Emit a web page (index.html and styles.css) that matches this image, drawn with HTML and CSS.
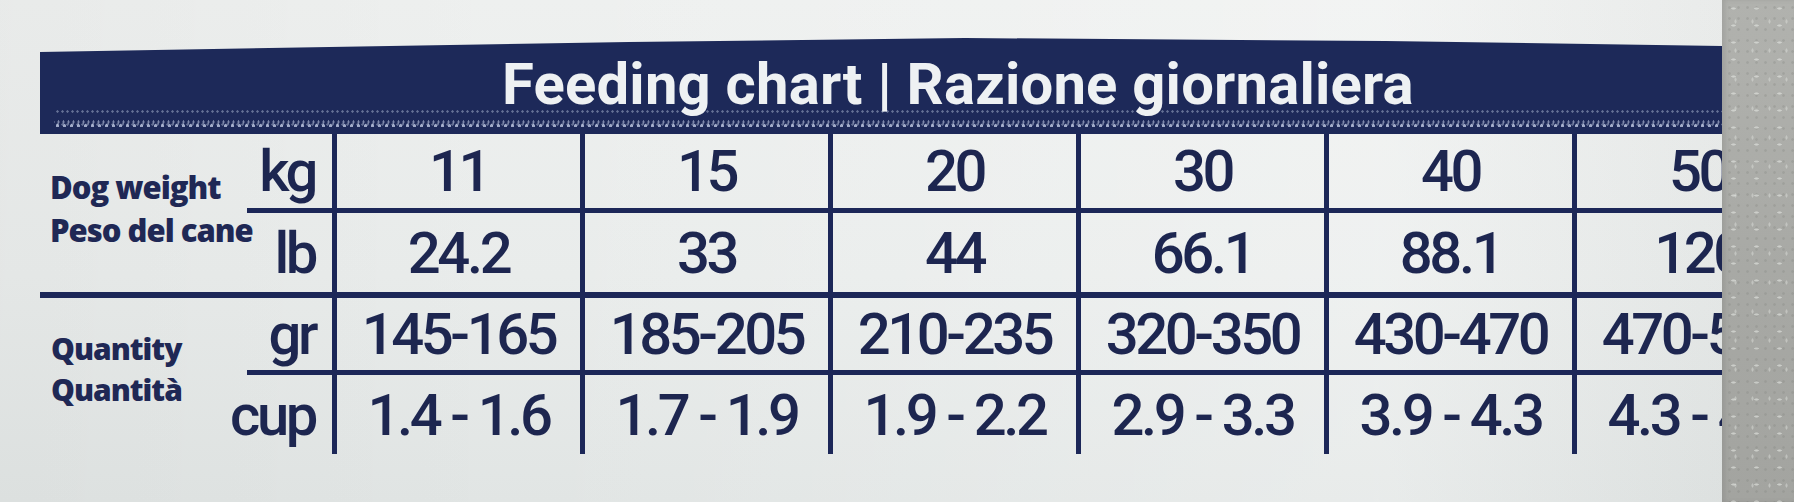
FILE: index.html
```html
<!DOCTYPE html>
<html lang="en">
<head>
<meta charset="utf-8">
<title>Feeding chart</title>
<link rel="stylesheet" href="styles.css">
</head>
<body>
<div class="scene">
  <div class="sheet">
    <div class="band">
      <h1 class="title">Feeding chart | Razione giornaliera</h1>
    </div>
    <div class="group group-weight">
      <div class="label">
        <span>Dog weight</span>
        <span>Peso del cane</span>
      </div>
      <div class="rows">
        <div class="row row-kg">
          <div class="unit">kg</div>
          <div class="cell">11</div>
          <div class="cell">15</div>
          <div class="cell">20</div>
          <div class="cell">30</div>
          <div class="cell">40</div>
          <div class="cell">50</div>
        </div>
        <div class="row row-lb">
          <div class="unit">lb</div>
          <div class="cell">24.2</div>
          <div class="cell">33</div>
          <div class="cell">44</div>
          <div class="cell">66.1</div>
          <div class="cell">88.1</div>
          <div class="cell">120</div>
        </div>
      </div>
    </div>
    <div class="group group-qty">
      <div class="label label-qty">
        <span>Quantity</span>
        <span>Quantità</span>
      </div>
      <div class="rows">
        <div class="row row-gr">
          <div class="unit">gr</div>
          <div class="cell">145-165</div>
          <div class="cell">185-205</div>
          <div class="cell">210-235</div>
          <div class="cell">320-350</div>
          <div class="cell">430-470</div>
          <div class="cell">470-510</div>
        </div>
        <div class="row row-cup">
          <div class="unit">cup</div>
          <div class="cell">1.4 - 1.6</div>
          <div class="cell">1.7 - 1.9</div>
          <div class="cell">1.9 - 2.2</div>
          <div class="cell">2.9 - 3.3</div>
          <div class="cell">3.9 - 4.3</div>
          <div class="cell">4.3 - 4.7</div>
        </div>
      </div>
    </div>
  </div>
  <div class="panel"></div>
</div>
</body>
</html>
```
FILE: styles.css
```css
html, body {
  margin: 0;
  padding: 0;
}

body {
  width: 1794px;
  height: 502px;
  overflow: hidden;
  background: linear-gradient(180deg, #eef0ef 0%, #e9eceb 55%, #e1e5e4 100%);
  color: #1d2650;
}

.scene {
  display: flex;
  height: 502px;
}

.sheet {
  flex: none;
  width: 1722px;
  box-sizing: border-box;
  padding: 38px 0 0 40px;
  overflow: hidden;
  background: linear-gradient(90deg, rgba(0,0,0,0.025) 0%, rgba(0,0,0,0) 30%, rgba(255,255,255,0.25) 80%, rgba(0,0,0,0.02) 100%);
}

.band {
  position: relative;
  height: 96px;
  background: #1d2959;
  clip-path: polygon(0 14px, 35% 4px, 55% 0, 80% 3px, 100% 8px, 100% 100%, 0 100%);
  padding-left: 462px;
  box-sizing: border-box;
}

.band::after {
  content: "";
  position: absolute;
  left: 14px;
  right: 0;
  bottom: 7px;
  height: 22px;
  background-image:
    radial-gradient(ellipse 1.5px 2.6px at 50% 50%, rgba(190, 200, 225, 0.8) 70%, transparent 100%),
    radial-gradient(ellipse 2.2px 1.3px at 50% 50%, rgba(190, 200, 225, 0.7) 70%, transparent 100%),
    radial-gradient(ellipse 1.2px 2px at 50% 50%, rgba(190, 200, 225, 0.6) 70%, transparent 100%),
    radial-gradient(circle at 50% 50%, rgba(190, 200, 225, 0.45) 0.9px, transparent 1.5px);
  background-size: 7px 22px, 11px 22px, 5px 22px, 5px 13px;
  background-position: 0 10px, 3px 14px, 2px 6px, 1px 0;
  background-repeat: repeat-x, repeat-x, repeat-x, repeat;
}

.title {
  position: relative;
  z-index: 1;
  margin: 0;
  font-family: Roboto, "Noto Sans", sans-serif;
  font-weight: 700;
  font-size: 58px;
  letter-spacing: 0.2px;
  line-height: 80px;
  padding-top: 6px;
  color: #eef1f3;
  white-space: nowrap;
}

.group {
  display: flex;
}

.group-qty {
  border-top: 6px solid #1c2758;
}

.label {
  flex: none;
  width: 207px;
  box-sizing: border-box;
  padding: 32px 0 0 10px;
  display: flex;
  flex-direction: column;
  font-family: "Open Sans", "DejaVu Sans", sans-serif;
  font-weight: 800;
  font-size: 31px;
  line-height: 43px;
  letter-spacing: -1px;
  color: #1f2855;
  white-space: nowrap;
}

.label-qty {
  padding-top: 30px;
  padding-left: 11px;
  line-height: 41px;
  font-size: 30px;
}

.rows {
  flex: 1;
  min-width: 0;
}

.row {
  display: grid;
  grid-template-columns: 85px repeat(6, 248px);
  font-family: Roboto, "Noto Sans", sans-serif;
  font-weight: 500;
  font-size: 58px;
  letter-spacing: -3.4px;
  color: #1d2650;
}

.row-kg {
  height: 79px;
  border-bottom: 5px solid #1c2758;
  box-sizing: border-box;
}

.row-lb {
  height: 79px;
}

.row-gr {
  height: 77px;
  border-bottom: 5px solid #1c2758;
  box-sizing: border-box;
}

.row-cup {
  height: 79px;
}

.unit {
  display: flex;
  align-items: center;
  justify-content: flex-end;
  padding-right: 17px;
  white-space: nowrap;
}

.cell {
  display: flex;
  align-items: center;
  justify-content: center;
  border-left: 5px solid #1c2758;
  white-space: nowrap;
}

.panel {
  flex: 1;
  background-color: #a9aaa6;
  background-image:
    radial-gradient(ellipse 3px 1.3px at 50% 50%, rgba(228, 230, 226, 0.6) 60%, transparent 100%),
    radial-gradient(circle at 50% 50%, rgba(130, 131, 127, 0.3) 0.8px, transparent 1.8px),
    radial-gradient(ellipse 1.3px 2.6px at 50% 50%, rgba(220, 222, 218, 0.5) 60%, transparent 100%),
    linear-gradient(180deg, #b1b2ae 0%, #a7a8a4 60%, #a3a4a0 100%);
  background-size: 23px 17px, 9px 11px, 17px 29px, 100% 100%;
  background-position: 0 0, 3px 2px, 5px 7px, 0 0;
  box-shadow: inset 3px 0 4px rgba(80, 80, 80, 0.15);
}
```
